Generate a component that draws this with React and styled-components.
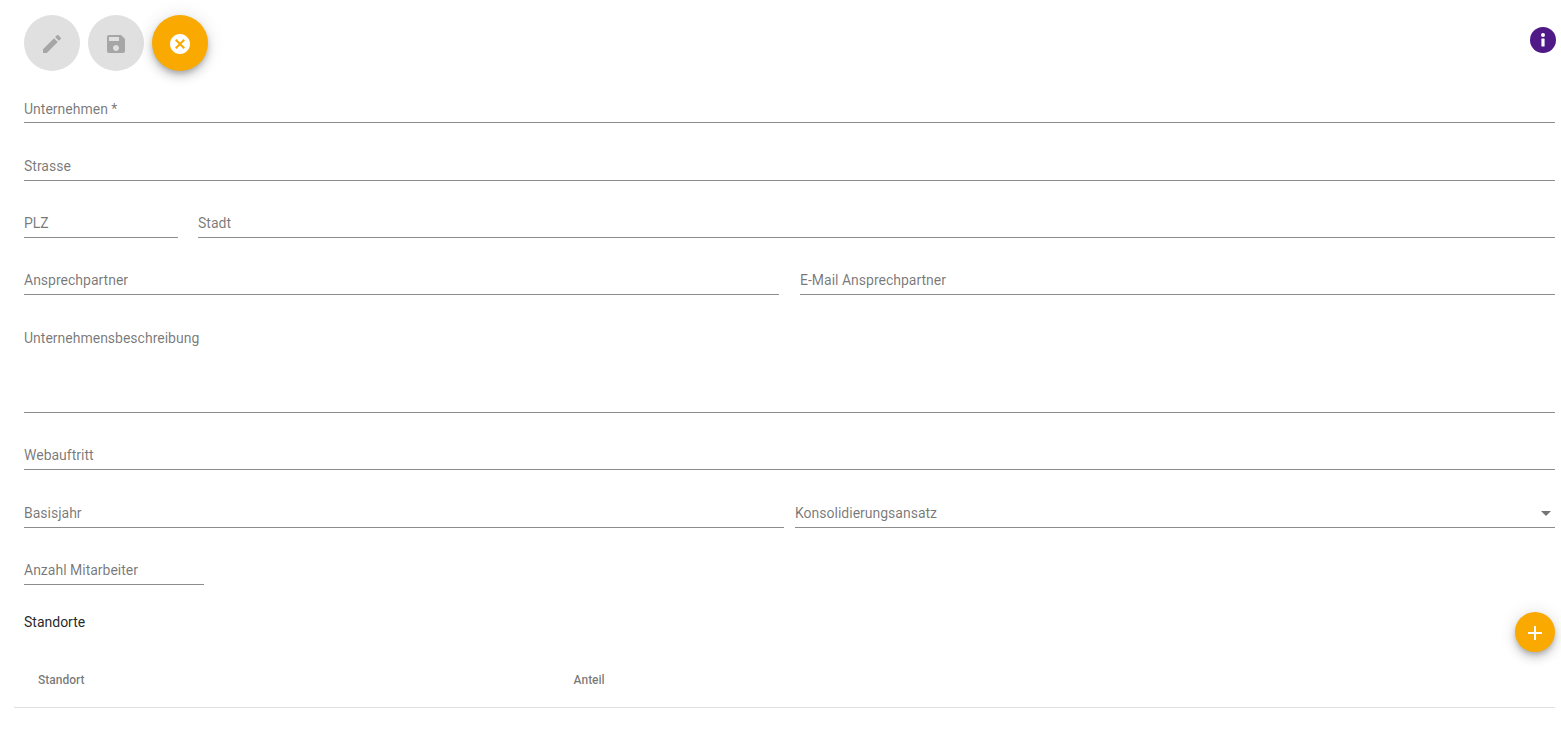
import React from "react";
import styled, { createGlobalStyle } from "styled-components";

const Global = createGlobalStyle`
  html, body { margin: 0; padding: 0; background: #fff; }
  body { font-family: Roboto, "Liberation Sans", sans-serif; font-size: 14px; }
`;

const Page = styled.div`
  padding: 15px 6px 0 24px;
  box-sizing: border-box;
  width: 1561px;
  height: 755px;
  overflow: hidden;
`;

const Toolbar = styled.div`
  display: flex;
  justify-content: space-between;
  height: 56px;
`;

const ActionGroup = styled.div`
  display: flex;
  gap: 8px;
`;

const RoundButton = styled.button`
  width: ${(p) => p.$size || 56}px;
  height: ${(p) => p.$size || 56}px;
  border: 0;
  padding: 2px 0 0;
  border-radius: 50%;
  display: flex;
  align-items: center;
  justify-content: center;
  background: ${(p) => (p.$active ? "#f9a900" : "#e0e0e0")};
  color: ${(p) => (p.$active ? "#fff" : "#a6a6a6")};
  box-shadow: ${(p) =>
    p.$active
      ? "0 3px 5px -1px rgba(0,0,0,.2), 0 6px 10px 0 rgba(0,0,0,.14), 0 1px 18px 0 rgba(0,0,0,.12)"
      : "none"};
`;

const InfoWrap = styled.div`
  margin: 12px -1px 0 0;
  width: 26px;
  height: 26px;
`;

const Form = styled.div`
  display: flex;
  flex-direction: column;
  gap: 25.33px;
  margin-top: 20.3px;
`;

const Row = styled.div`
  display: flex;
  gap: ${(p) => p.$gap || 0}px;
`;

const Field = styled.div`
  flex: ${(p) => (p.$width ? `0 0 ${p.$width}px` : "1 1 0")};
  height: ${(p) => p.$height || 32}px;
  box-sizing: border-box;
  border-bottom: 1px solid #8c8c8c;
  display: flex;
  justify-content: space-between;
  padding-top: ${(p) => p.$top || 9.2}px;
`;

const Label = styled.span`
  font-size: 14px;
  line-height: 16px;
  color: rgba(0, 0, 0, 0.54);
`;

const Caret = styled.span`
  width: 0;
  height: 0;
  margin: 6px 4px 0 0;
  border-left: 5px solid transparent;
  border-right: 5px solid transparent;
  border-top: 5px solid rgba(0, 0, 0, 0.54);
`;

const SectionHead = styled.div`
  display: flex;
  justify-content: space-between;
  margin-top: 27px;
  height: 40px;
`;

const SectionTitle = styled.span`
  font-size: 14px;
  line-height: 20px;
  color: rgba(0, 0, 0, 0.87);
`;

const TableHead = styled.div`
  display: grid;
  grid-template-columns: 535.6px 1fr;
  margin: 0 0 0 -10px;
  padding: 2px 24px 0;
  height: 56px;
  align-items: center;
  box-sizing: border-box;
  border-bottom: 1px solid #e0e0e0;
`;

const HeadCell = styled.span`
  font-size: 12px;
  font-weight: 500;
  color: rgba(0, 0, 0, 0.54);
`;

const Icon = ({ d, size = 24 }) => (
  <svg width={size} height={size} viewBox="0 0 24 24" fill="currentColor">
    <path d={d} />
  </svg>
);

const EDIT = "M3 17.25V21h3.75L17.81 9.94l-3.75-3.75L3 17.25zM20.71 7.04c.39-.39.39-1.02 0-1.41l-2.34-2.34c-.39-.39-1.02-.39-1.41 0l-1.83 1.83 3.75 3.75 1.83-1.83z";
const SAVE = "M17 3H5c-1.11 0-2 .9-2 2v14c0 1.1.89 2 2 2h14c1.1 0 2-.9 2-2V7l-4-4zm-5 16c-1.66 0-3-1.34-3-3s1.34-3 3-3 3 1.34 3 3-1.34 3-3 3zm3-10H5V5h10v4z";
const CANCEL = "M12 2C6.47 2 2 6.47 2 12s4.47 10 10 10 10-4.47 10-10S17.53 2 12 2zm5 13.59L15.59 17 12 13.41 8.41 17 7 15.59 10.59 12 7 8.41 8.41 7 12 10.59 15.59 7 17 8.41 13.41 12 17 15.59z";
const ADD = "M19 13h-6v6h-2v-6H5v-2h6V5h2v6h6v2z";

const InfoIcon = () => (
  <svg width="26" height="26" viewBox="0 0 26 26">
    <circle cx="13" cy="13" r="13" fill="#4f1a87" />
    <circle cx="13" cy="8" r="2" fill="#fff" />
    <rect x="11.4" y="11.5" width="3.2" height="8" rx="0.4" fill="#fff" />
  </svg>
);

export default function App() {
  return (
    <Page>
      <Global />
      <Toolbar>
        <ActionGroup>
          <RoundButton aria-label="Bearbeiten"><Icon d={EDIT} /></RoundButton>
          <RoundButton aria-label="Speichern"><Icon d={SAVE} /></RoundButton>
          <RoundButton $active aria-label="Abbrechen"><Icon d={CANCEL} /></RoundButton>
        </ActionGroup>
        <InfoWrap><InfoIcon /></InfoWrap>
      </Toolbar>
      <Form>
        <Row><Field $top={10}><Label>Unternehmen *</Label></Field></Row>
        <Row><Field><Label>Strasse</Label></Field></Row>
        <Row $gap={20}>
          <Field $width={154}><Label>PLZ</Label></Field>
          <Field><Label>Stadt</Label></Field>
        </Row>
        <Row $gap={21}>
          <Field><Label>Ansprechpartner</Label></Field>
          <Field><Label>E-Mail Ansprechpartner</Label></Field>
        </Row>
        <Row><Field $height={92.34}><Label>Unternehmensbeschreibung</Label></Field></Row>
        <Row><Field><Label>Webauftritt</Label></Field></Row>
        <Row $gap={11}>
          <Field><Label>Basisjahr</Label></Field>
          <Field><Label>Konsolidierungsansatz</Label><Caret /></Field>
        </Row>
        <Row><Field $width={180}><Label>Anzahl Mitarbeiter</Label></Field></Row>
      </Form>
      <SectionHead>
        <SectionTitle>Standorte</SectionTitle>
        <RoundButton $active $size={40} aria-label="Hinzufügen"><Icon d={ADD} /></RoundButton>
      </SectionHead>
      <TableHead>
        <HeadCell>Standort</HeadCell>
        <HeadCell>Anteil</HeadCell>
      </TableHead>
    </Page>
  );
}
